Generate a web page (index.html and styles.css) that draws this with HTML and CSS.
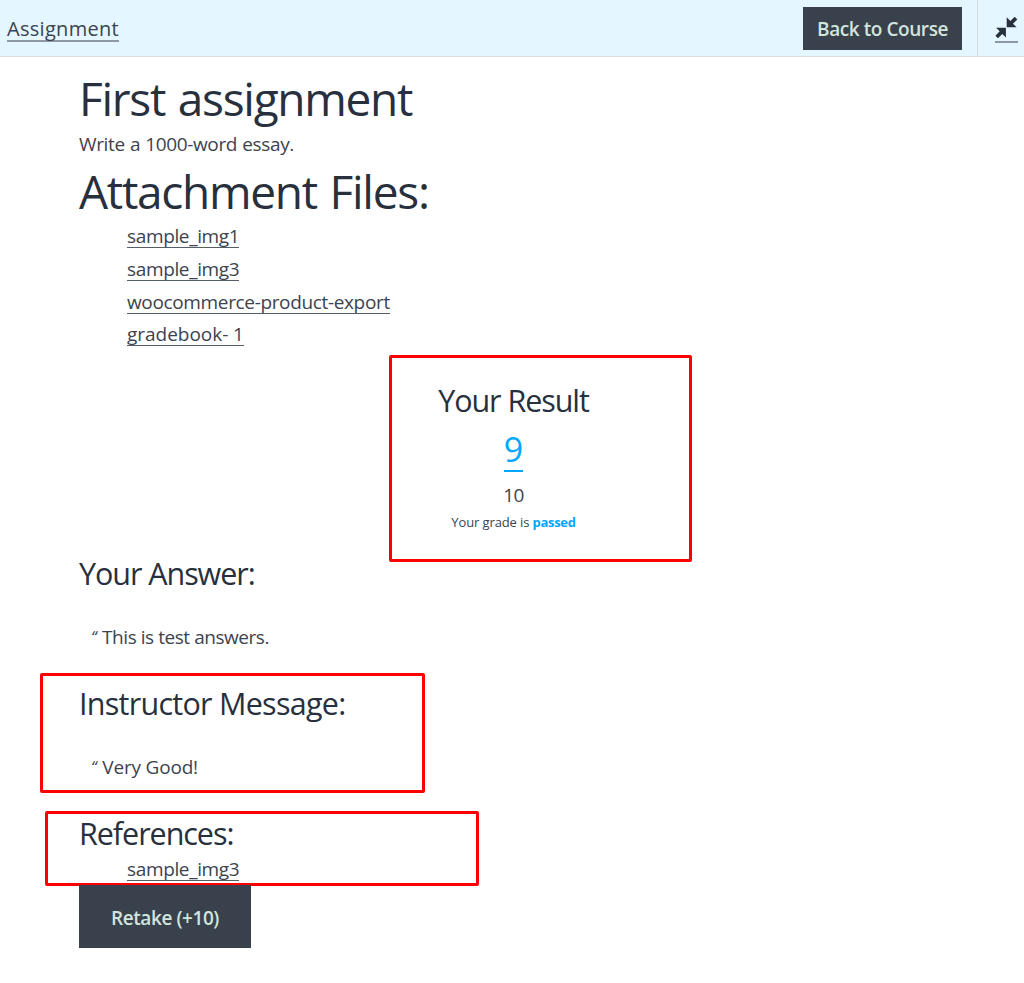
FILE: index.html
```html
<!DOCTYPE html>
<html lang="en">
<head>
<meta charset="utf-8">
<title>Assignment</title>
<link rel="stylesheet" href="styles.css">
</head>
<body>
<header class="topbar">
  <a class="link crumb">Assignment</a>
  <a class="button back">Back to Course</a>
  <a class="toggle">
    <svg class="toggle-icon" viewBox="0 0 23 23" width="23" height="23"><path d="M11.7 1.2V11.3H21.6L18 7.8 22.3 3.4 19.7.8 15.4 5.1ZM10.9 11.8H1.1L4.7 15.3.4 19.7 3 22.3 7.3 18 10.9 21.6Z"/></svg>
  </a>
</header>
<main class="content">
  <h1 class="title first">First assignment</h1>
  <p class="intro">Write a 1000-word essay.</p>
  <h1 class="title">Attachment Files:</h1>
  <ul class="files">
    <li><a class="link">sample_img1</a></li>
    <li><a class="link">sample_img3</a></li>
    <li><a class="link">woocommerce-product-export</a></li>
    <li><a class="link spaced">gradebook- 1</a></li>
  </ul>
  <section class="mark result">
    <h3 class="subtitle">Your Result</h3>
    <div class="score">9</div>
    <div class="total">10</div>
    <div class="grade">Your grade is <b>passed</b></div>
  </section>
  <section class="answer">
    <h3 class="subtitle">Your Answer:</h3>
    <p class="quote">This is test answers.</p>
  </section>
  <section class="mark message">
    <h3 class="subtitle">Instructor Message:</h3>
    <p class="quote">Very Good!</p>
  </section>
  <section class="mark references">
    <h3 class="subtitle">References:</h3>
    <ul class="files"><li><a class="link">sample_img3</a></li></ul>
  </section>
  <a class="button retake">Retake (+10)</a>
</main>
</body>
</html>
```
FILE: styles.css
```css
* {
  box-sizing: border-box;
}

body {
  margin: 0;
  background: #fff;
  color: #3c434f;
  font: 19px/38px "Open Sans", "Noto Sans", sans-serif;
}

h1, h3, p, ul {
  margin: 0;
  padding: 0;
  font-weight: 400;
}

ul {
  list-style: none;
}

.topbar {
  display: flex;
  align-items: center;
  height: 57px;
  padding-left: 7px;
  background: #e4f6ff;
  border-bottom: 1px solid #d9dde0;
}

.link {
  display: inline-block;
  height: 24px;
  line-height: 25px;
  border-bottom: 1px solid #555d69;
  letter-spacing: -0.35px;
}

.link.spaced {
  letter-spacing: -0.03px;
}

.link.crumb {
  height: 25px;
  margin-top: 3px;
  border-bottom: 2px solid #8c98a5;
  font-size: 20px;
  line-height: 24px;
  letter-spacing: 0.3px;
}

.button {
  display: flex;
  align-items: center;
  justify-content: center;
  padding-top: 1px;
  background: #39414d;
  color: #d1e4dd;
  font-weight: 600;
  letter-spacing: -0.43px;
}

.back {
  width: 159px;
  height: 43px;
  margin-left: auto;
}

.toggle {
  height: 56px;
  width: 47px;
  margin-left: 15px;
  padding: 16px 0 0 17px;
  border-left: 1px solid #d9dde0;
}

.toggle-icon {
  display: block;
  height: 27px;
  padding-bottom: 2px;
  border-bottom: 2px solid #8c98a5;
  fill: #28303d;
}

.content {
  padding: 14px 0 0 79px;
}

.title {
  height: 54px;
  color: #28303d;
  font-size: 46px;
  line-height: 56px;
  letter-spacing: -1.28px;
  word-spacing: 2px;
}

.title.first {
  line-height: 54px;
}

.intro {
  letter-spacing: -0.35px;
  word-spacing: 0.5px;
}

.files {
  padding: 3px 0 0 48px;
}

.files li {
  height: 32.8px;
  line-height: 32.8px;
}

.subtitle {
  height: 38px;
  color: #28303d;
  font-size: 30.5px;
  letter-spacing: -1.05px;
}

.mark {
  border: 3px solid #fe0000;
  border-radius: 2px;
}

.result {
  display: flex;
  flex-direction: column;
  align-items: center;
  width: 303px;
  height: 207px;
  margin: 4px 0 0 310px;
  padding: 23px 54px 0 0;
}

.score {
  height: 39px;
  margin-top: 14px;
  border-bottom: 2px solid #00a8ff;
  color: #00a8ff;
  font-size: 34px;
  line-height: 32px;
}

.total {
  margin-top: 4px;
  letter-spacing: -0.5px;
}

.grade {
  margin-top: -1px;
  font-size: 13px;
  line-height: 18px;
  letter-spacing: -0.12px;
}

.grade b {
  color: #00a8ff;
  letter-spacing: -0.3px;
}

.answer {
  height: 119px;
  margin-top: -8px;
}

.quote {
  display: flex;
  gap: 6px;
  margin-top: 26px;
  padding-left: 12px;
  letter-spacing: -0.45px;
}

.quote::before {
  content: "“";
  font-size: 16px;
  font-style: italic;
}

.message {
  width: 385px;
  height: 120px;
  margin-left: -39px;
  padding: 8px 0 0 36px;
}

.message .subtitle {
  letter-spacing: -0.73px;
}

.message .quote {
  letter-spacing: -0.2px;
}

.references {
  width: 434px;
  height: 75px;
  margin: 18px 0 0 -34px;
  padding-left: 31px;
}

.references .subtitle {
  line-height: 39px;
}

.references .files {
  padding-top: 1px;
}

.retake {
  width: 172px;
  height: 63px;
  margin-top: -1px;
  padding-top: 3px;
}
```
